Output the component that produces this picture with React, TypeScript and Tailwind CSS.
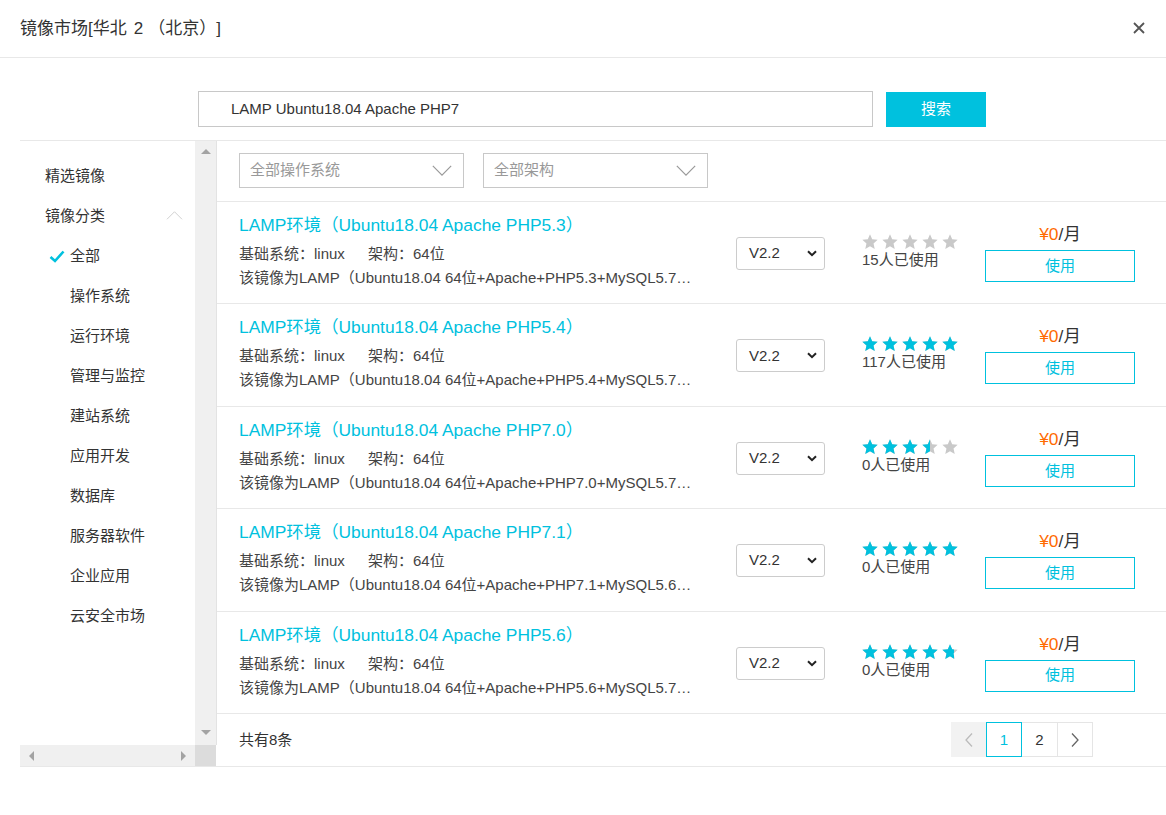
import React from "react";

const items = [
  { ver: "PHP5.3", db: "MySQL5.7", rating: 0, used: "15人已使用" },
  { ver: "PHP5.4", db: "MySQL5.7", rating: 5, used: "117人已使用" },
  { ver: "PHP7.0", db: "MySQL5.7", rating: 3.5, used: "0人已使用" },
  { ver: "PHP7.1", db: "MySQL5.6", rating: 5, used: "0人已使用" },
  { ver: "PHP5.6", db: "MySQL5.7", rating: 4.75, used: "0人已使用" },
];

const categories = [
  "操作系统",
  "运行环境",
  "管理与监控",
  "建站系统",
  "应用开发",
  "数据库",
  "服务器软件",
  "企业应用",
  "云安全市场",
];

function StarShape({ color }: { color: string }) {
  return (
    <svg width="16" height="16" viewBox="0 0 24 24">
      <polygon
        points="12,0.5 15.3,7.9 23.5,8.7 17.3,14.2 19.1,22.6 12,18.4 4.9,22.6 6.7,14.2 0.5,8.7 8.7,7.9"
        fill={color}
      />
    </svg>
  );
}

function Star({ fill }: { fill: number }) {
  return (
    <div className="relative w-[16px] h-[16px]">
      <StarShape color="#c9c9c9" />
      <div
        className="absolute left-0 top-0 h-[16px] overflow-hidden"
        style={{ width: `${fill * 16}px` }}
      >
        <StarShape color="#00c1de" />
      </div>
    </div>
  );
}

function Chevron({ up, className }: { up?: boolean; className?: string }) {
  return (
    <svg width="22" height="12" viewBox="0 0 22 12" className={className}>
      <polyline
        points={up ? "1,11 11,1 21,11" : "1,1 11,11 21,1"}
        fill="none"
        stroke={up ? "#cfcfcf" : "#999"}
        strokeWidth="1.3"
      />
    </svg>
  );
}

export default function App() {
  return (
    <div
      className="w-[1166px] h-[815px] bg-white text-[#333] overflow-hidden"
      style={{ fontFamily: '"Liberation Sans", "Noto Sans CJK SC", sans-serif' }}
    >
      {/* Header */}
      <div className="h-[58px] flex items-center justify-between pl-5 pr-[20px] border-b border-[#e8e8e8]">
        <div className="text-[17px] leading-none text-[#333] -mt-[1px] flex items-baseline">
          <span>镜像市场[华北</span>
          <span className="ml-[7px]">2</span>
          <span className="ml-[5px]">（</span>
          <span>北京</span>
          <span>）</span>
          <span>]</span>
        </div>
        <svg width="14" height="14" viewBox="0 0 14 14" className="-mt-[1px]">
          <path d="M2 2 L12 12 M12 2 L2 12" stroke="#555" strokeWidth="1.8" />
        </svg>
      </div>

      {/* Search */}
      <div className="flex pl-[198px] pt-[33px] pb-[13px] gap-[13px]">
        <div className="w-[675px] h-[36px] border border-[#c8c8c8] flex items-center pl-[32px] text-[15px] text-[#333]">
          LAMP Ubuntu18.04 Apache PHP7
        </div>
        <button className="w-[100px] h-[35px] mt-[1px] bg-[#00c1de] text-white text-[15px]">
          搜索
        </button>
      </div>

      {/* Main */}
      <div className="ml-5 flex border-t border-b border-[#e8e8e8] h-[627px]">
        {/* Sidebar */}
        <div className="w-[197px] flex flex-col">
          <div className="flex flex-1">
            <div className="w-[175px] pt-[15px] text-[15px] text-[#333]">
              <div className="h-10 flex items-center pl-[25px]">精选镜像</div>
              <div className="h-10 flex items-center justify-between pl-[25px] pr-[12px]">
                <span>镜像分类</span>
                <Chevron up className="w-[17px] h-[9px] -mt-[2px]" />
              </div>
              <div className="h-10 flex items-center pl-[29px]">
                <svg width="16" height="13" viewBox="0 0 16 13" className="mr-[5px]">
                  <path d="M1.5 7 L6 11 L14.5 1.5" fill="none" stroke="#00c1de" strokeWidth="2.6" />
                </svg>
                全部
              </div>
              {categories.map((c) => (
                <div key={c} className="h-10 flex items-center pl-[50px]">
                  {c}
                </div>
              ))}
            </div>
            <div className="w-[22px] bg-[#f0f0f0] border-r border-[#e3e3e3] flex flex-col items-center justify-between pt-[8px] pb-[10px]">
              <div className="w-0 h-0 border-l-[5px] border-r-[5px] border-b-[5px] border-l-transparent border-r-transparent border-b-[#a3a3a3]" />
              <div className="w-0 h-0 border-l-[5px] border-r-[5px] border-t-[5px] border-l-transparent border-r-transparent border-t-[#a3a3a3]" />
            </div>
          </div>
          <div className="h-[21px] flex">
            <div className="w-[175px] bg-[#f0f0f0] flex items-center justify-between px-[9px]">
              <div className="w-0 h-0 border-t-[5px] border-b-[5px] border-r-[5px] border-t-transparent border-b-transparent border-r-[#a3a3a3]" />
              <div className="w-0 h-0 border-t-[5px] border-b-[5px] border-l-[5px] border-t-transparent border-b-transparent border-l-[#a3a3a3]" />
            </div>
            <div className="w-[21px] bg-[#dcdcdc]" />
          </div>
        </div>

        {/* Content */}
        <div className="flex-1 flex flex-col">
          <div className="h-[61px] border-b border-[#e8e8e8] flex gap-[19px] pl-[22px] pt-[12px]">
            {["全部操作系统", "全部架构"].map((t) => (
              <div
                key={t}
                className="w-[225px] h-[35px] border border-[#c8c8c8] flex items-center justify-between pl-[10px] pr-[10px] text-[15px] text-[#999]"
              >
                <span>{t}</span>
                <Chevron className="w-[22px] h-[11px]" />
              </div>
            ))}
          </div>

          {items.map((it) => (
            <div
              key={it.ver}
              className="h-[102.4px] border-b border-[#e8e8e8] flex items-start pl-[22px] pr-[30px]"
            >
              <div className="w-[497px] mt-[13px]">
                <div className="text-[17.4px] leading-[20px] text-[#00c1de]">
                  LAMP环境（Ubuntu18.04 Apache {it.ver}）
                </div>
                <div className="text-[15px] leading-[17px] text-[#444] mt-[10px] flex">
                  <span className="w-[129px]">基础系统：linux</span>
                  <span>架构：64位</span>
                </div>
                <div className="text-[15px] leading-[17px] text-[#444] mt-[7px] whitespace-nowrap">
                  该镜像为LAMP（Ubuntu18.04 64位+Apache+{it.ver}+{it.db}…
                </div>
              </div>

              <div className="w-[89px] h-[33px] mt-[35px] border border-[#ccc] rounded-[3px] flex items-center justify-between pl-[12px] pr-[7px] text-[15px] text-[#333]">
                <span>V2.2</span>
                <svg width="10" height="7" viewBox="0 0 10 7">
                  <path d="M1 1.2 L5 5.2 L9 1.2" fill="none" stroke="#222" strokeWidth="2" />
                </svg>
              </div>

              <div className="w-[123px] ml-[37px] mt-[32px]">
                <div className="flex gap-[4px]">
                  {[0, 1, 2, 3, 4].map((i) => (
                    <Star key={i} fill={Math.max(0, Math.min(1, it.rating - i))} />
                  ))}
                </div>
                <div className="text-[15px] leading-[17px] text-[#444] mt-[1px]">{it.used}</div>
              </div>

              <div className="w-[150px] flex flex-col items-center mt-[22px]">
                <div className="text-[17.4px] leading-[20px]">
                  <span className="text-[#ff6a00]">¥0</span>
                  <span className="text-[#333]">/月</span>
                </div>
                <button className="w-[150px] h-[32px] mt-[6px] border border-[#00c1de] text-[#00c1de] text-[15px]">
                  使用
                </button>
              </div>
            </div>
          ))}

          <div className="flex-1 flex items-center justify-between pl-[22px] pr-[73px]">
            <span className="text-[15px] text-[#333]">共有8条</span>
            <div className="flex text-[15px]">
              <div className="w-[35px] h-[35px] bg-[#f2f2f2] flex items-center justify-center">
                <svg width="10" height="16" viewBox="0 0 10 16">
                  <path d="M8 1.5 L2 8 L8 14.5" fill="none" stroke="#bbb" strokeWidth="1.3" />
                </svg>
              </div>
              <div className="w-[36px] h-[35px] border border-[#00c1de] text-[#00c1de] flex items-center justify-center">
                1
              </div>
              <div className="w-[36px] h-[35px] border border-l-0 border-[#e5e5e5] text-[#333] flex items-center justify-center">
                2
              </div>
              <div className="w-[35px] h-[35px] border border-l-0 border-[#e5e5e5] flex items-center justify-center">
                <svg width="10" height="16" viewBox="0 0 10 16">
                  <path d="M2 1.5 L8 8 L2 14.5" fill="none" stroke="#666" strokeWidth="1.3" />
                </svg>
              </div>
            </div>
          </div>
        </div>
      </div>
    </div>
  );
}
